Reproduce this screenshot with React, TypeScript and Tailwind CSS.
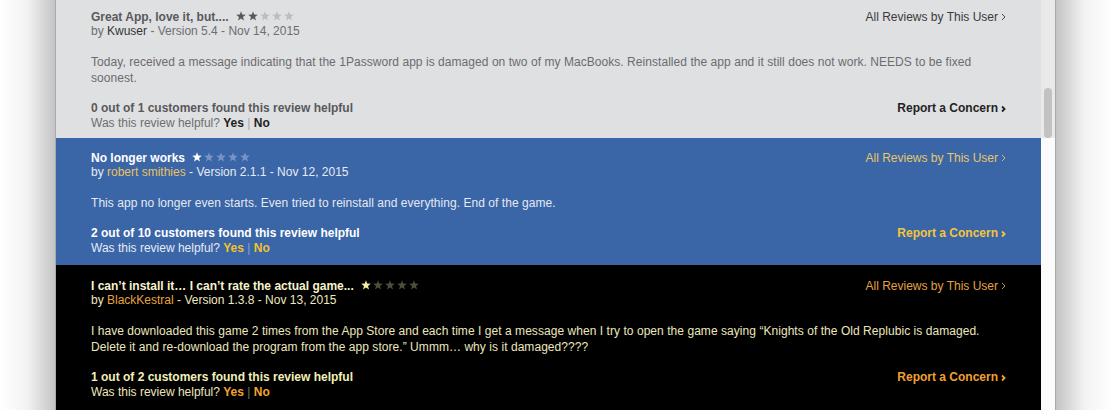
import React from "react";

type Theme = {
  bg: string;
  title: string;
  starOn: string;
  starOff: string;
  by: string;
  user: string;
  body: string;
  helpful: string;
  was: string;
  yesno: string;
  sep: string;
  all: string;
  report: string;
};

const gray: Theme = {
  bg: "bg-[#dfe0e2]",
  title: "text-[#58595b]",
  starOn: "#58595b",
  starOff: "#bcbdbf",
  by: "text-[#6d6e70]",
  user: "text-[#333436]",
  body: "text-[#6b6c6e]",
  helpful: "text-[#58595b]",
  was: "text-[#6d6e70]",
  yesno: "text-[#1e1e1e]",
  sep: "text-[#a5a6a8]",
  all: "text-[#3a3a3c]",
  report: "text-[#232323]",
};

const blue: Theme = {
  bg: "bg-[#3a65a7]",
  title: "text-white",
  starOn: "#ffffff",
  starOff: "#7b93c2",
  by: "text-[#e6ebf3]",
  user: "text-[#e8c25e]",
  body: "text-[#e4e9f2]",
  helpful: "text-white",
  was: "text-[#e6ebf3]",
  yesno: "text-[#f1c230]",
  sep: "text-[#8fa5cc]",
  all: "text-[#e7c766]",
  report: "text-[#f2c53a]",
};

const black: Theme = {
  bg: "bg-black",
  title: "text-[#f7f3cc]",
  starOn: "#f5ef9e",
  starOff: "#4d4d3a",
  by: "text-[#efe9c0]",
  user: "text-[#e6a43c]",
  body: "text-[#ece6be]",
  helpful: "text-[#f3efb8]",
  was: "text-[#ece6be]",
  yesno: "text-[#f0a42c]",
  sep: "text-[#777777]",
  all: "text-[#e4a23e]",
  report: "text-[#f0a030]",
};

function Star({ color }: { color: string }) {
  return (
    <svg width="10" height="10" viewBox="0 0 10 10" className="block">
      <polygon
        points="5,0.2 6.2,3.6 9.8,3.7 7,5.9 8,9.5 5,7.4 2,9.5 3,5.9 0.2,3.7 3.8,3.6"
        fill={color}
      />
    </svg>
  );
}

function Stars({ n, theme }: { n: number; theme: Theme }) {
  return (
    <span className="ml-[7px] inline-flex items-center gap-[2px] -translate-y-[1px]">
      {[0, 1, 2, 3, 4].map((i) => (
        <Star key={i} color={i < n ? theme.starOn : theme.starOff} />
      ))}
    </span>
  );
}

function ThinChevron() {
  return (
    <svg width="5" height="8" viewBox="0 0 5 8" className="inline-block ml-[3px]">
      <polyline points="1,1 4,4 1,7" fill="none" stroke="currentColor" strokeWidth="0.9" />
    </svg>
  );
}

function BoldChevron() {
  return (
    <svg width="5" height="8" viewBox="0 0 5 8" className="inline-block ml-[3px]">
      <polyline points="1,1.5 3.6,4 1,6.5" fill="none" stroke="currentColor" strokeWidth="1.8" />
    </svg>
  );
}

type Review = {
  theme: Theme;
  title: string;
  stars: number;
  user: string;
  meta: string;
  body: string[];
  helpful: string;
  extra: string;
};

function ReviewBlock({ r }: { r: Review }) {
  const t = r.theme;
  return (
    <div className={`${t.bg} pl-[35px] pr-[35px] ${r.extra}`}>
      <div className="flex items-start justify-between">
        <div>
          <div className={`flex items-center h-[14px] leading-[14px] font-bold ${t.title}`}>
            <span>{r.title}</span>
            <Stars n={r.stars} theme={t} />
          </div>
          <div className={`h-[14px] leading-[14px] ${t.by}`}>
            by <span className={t.user}>{r.user}</span> {r.meta}
          </div>
        </div>
        <div className={`h-[14px] leading-[14px] flex items-center ${t.all}`}>
          All Reviews by This User
          <ThinChevron />
        </div>
      </div>
      <div className={`mt-[16px] leading-[16px] tracking-[0.05px] ${t.body}`}>
        {r.body.map((l, i) => (
          <div key={i}>{l}</div>
        ))}
      </div>
      <div className="mt-[15px] flex items-start justify-between">
        <div>
          <div className={`h-[15px] leading-[15px] font-bold ${t.helpful}`}>{r.helpful}</div>
          <div className={`h-[15px] leading-[15px] ${t.was}`}>
            Was this review helpful? <span className={`font-bold ${t.yesno}`}>Yes</span>{" "}
            <span className={t.sep}>|</span> <span className={`font-bold ${t.yesno}`}>No</span>
          </div>
        </div>
        <div className={`h-[15px] leading-[15px] font-bold flex items-center ${t.report}`}>
          Report a Concern
          <BoldChevron />
        </div>
      </div>
    </div>
  );
}

const reviews: Review[] = [
  {
    theme: gray,
    title: "Great App, love it, but....",
    stars: 2,
    user: "Kwuser",
    meta: "- Version 5.4 - Nov 14, 2015",
    body: [
      "Today, received a message indicating that the 1Password app is damaged on two of my MacBooks. Reinstalled the app and it still does not work. NEEDS to be fixed",
      "soonest.",
    ],
    helpful: "0 out of 1 customers found this review helpful",
    extra: "-mt-[3px] pt-[13px] pb-[7px]",
  },
  {
    theme: blue,
    title: "No longer works",
    stars: 1,
    user: "robert smithies",
    meta: "- Version 2.1.1 - Nov 12, 2015",
    body: ["This app no longer even starts. Even tried to reinstall and everything. End of the game."],
    helpful: "2 out of 10 customers found this review helpful",
    extra: "pt-[13px] pb-[9px]",
  },
  {
    theme: black,
    title: "I can\u2019t install it\u2026 I can\u2019t rate the actual game...",
    stars: 1,
    user: "BlackKestral",
    meta: "- Version 1.3.8 - Nov 13, 2015",
    body: [
      "I have downloaded this game 2 times from the App Store and each time I get a message when I try to open the game saying \u201cKnights of the Old Replubic is damaged.",
      "Delete it and re-download the program from the app store.\u201d Ummm\u2026 why is it damaged????",
    ],
    helpful: "1 out of 2 customers found this review helpful",
    extra: "pt-[14px] pb-[20px]",
  },
];

export default function App() {
  return (
    <div
      className="w-[1112px] h-[410px] flex overflow-hidden bg-white text-[12px]"
      style={{ fontFamily: '"Liberation Sans", Arial, Helvetica, sans-serif' }}
    >
      <div className="w-[55px] h-full bg-gradient-to-r from-white via-[#f2f2f2] to-[#c4c4c4]" />
      <div className="w-[1001px] h-full flex border-l border-r border-[#a9a9a9] overflow-hidden">
        <div className="flex-1 flex flex-col">
          {reviews.map((r, i) => (
            <ReviewBlock key={i} r={r} />
          ))}
        </div>
        <div className="w-[14px] h-full flex flex-col relative bg-[#fbfbfb]">
          <div className="h-[138px] bg-[#e9e9ea]" />
          <div className="absolute left-[3px] top-[88px] w-[8px] h-[50px] rounded-full bg-[#c2c2c2]" />
        </div>
      </div>
      <div className="flex-1 h-full bg-gradient-to-l from-white via-[#f2f2f2] to-[#c4c4c4]" />
    </div>
  );
}
